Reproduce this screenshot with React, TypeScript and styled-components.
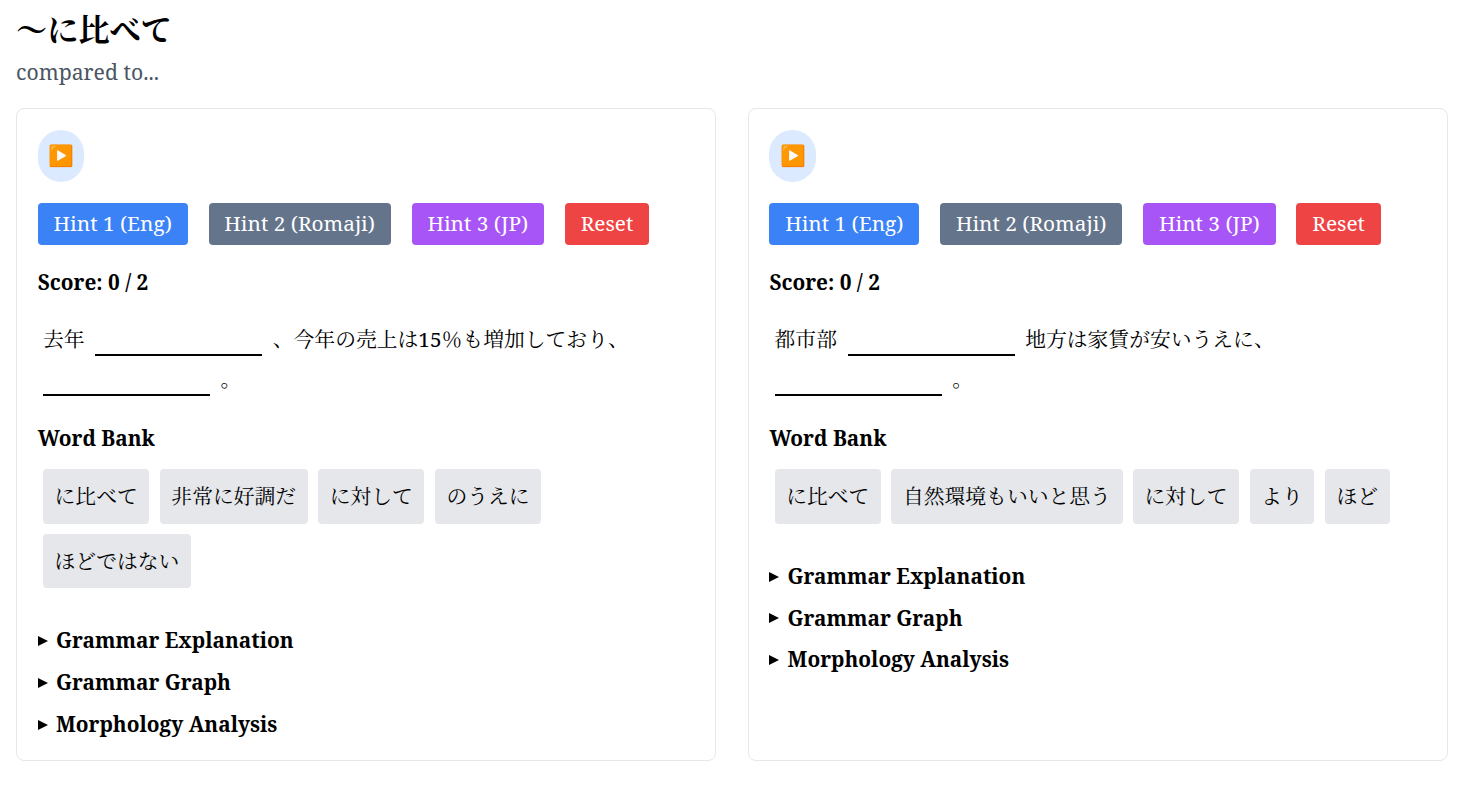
import styled, { createGlobalStyle } from 'styled-components';

const serif = `"Noto Serif", "Noto Serif CJK JP", "Liberation Serif", "Noto Sans CJK JP", serif`;

const GlobalStyle = createGlobalStyle`
  html, body {
    margin: 0;
    background: #fff;
    color: #000;
    font-family: ${serif};
    font-size: 20.8px;
  }
`;

const Page = styled.div`
  padding: 7px 16px 16px;
`;

const Title = styled.h1`
  margin: 0;
  font-size: 31.2px;
  line-height: 44px;
  font-weight: 700;
`;

const Subtitle = styled.p`
  margin: 2px 0 17px;
  font-size: 21.2px;
  line-height: 38px;
  color: #4b5563;
`;

const Grid = styled.div`
  display: grid;
  grid-template-columns: 700px 700px;
  gap: 31.6px;
`;

const Card = styled.section`
  box-sizing: border-box;
  height: 653px;
  padding: 21px 20.8px;
  border: 1px solid #e5e7eb;
  border-radius: 8px;
`;

const PlayButton = styled.button`
  display: block;
  width: 46.4px;
  height: 52px;
  padding: 0 0 0 1px;
  border: none;
  border-radius: 9999px;
  background: #dbeafe;
  font-size: 20.8px;
`;

const Toolbar = styled.div`
  display: flex;
  gap: 20.9px;
  margin-top: 21px;
`;

const HintButton = styled.button<{ $bg: string }>`
  height: 42px;
  padding: 0 15.8px 2px;
  border: none;
  border-radius: 4px;
  background: ${p => p.$bg};
  color: #fff;
  font-family: ${serif};
  font-size: 20.8px;
`;

const Score = styled.div`
  margin-top: 22px;
  line-height: 30px;
  font-weight: 700;
`;

const Sentence = styled.p`
  margin: 22px 0 0;
  padding: 0 5.2px;
  line-height: 40px;
`;

const Blank = styled.span<{ $first?: boolean }>`
  display: inline-block;
  box-sizing: border-box;
  width: 167px;
  height: 28px;
  margin: 0 10.6px 0 ${p => (p.$first ? 0 : 10.6)}px;
  border-bottom: 2px solid #000;
  vertical-align: -9px;
`;

const BankTitle = styled.div`
  margin-top: 24px;
  line-height: 30px;
  font-weight: 700;
`;

const Bank = styled.div`
  display: flex;
  flex-wrap: wrap;
  gap: 10px;
  margin-top: 16px;
  padding: 0 5.2px;
  column-gap: 10.4px;
`;

const Word = styled.span`
  padding: 12px 11.6px;
  border-radius: 4px;
  background: #e5e7eb;
  line-height: 30.6px;
`;

const Sections = styled.div`
  margin-top: 38.2px;
  display: flex;
  flex-direction: column;
  gap: 12px;
`;

const Summary = styled.div`
  display: flex;
  align-items: center;
  gap: 8.2px;
  line-height: 29.8px;
  font-weight: 700;

  &::before {
    content: '';
    width: 0;
    height: 0;
    border-left: 10px solid #000;
    border-top: 5px solid transparent;
    border-bottom: 5px solid transparent;
  }
`;

const hints = [
  { label: 'Hint 1 (Eng)', bg: '#3b82f6' },
  { label: 'Hint 2 (Romaji)', bg: '#64748b' },
  { label: 'Hint 3 (JP)', bg: '#a855f7' },
  { label: 'Reset', bg: '#ef4444' },
];

const cards = [
  {
    start: '去年',
    middle: '、今年の売上は15％も増加しており、',
    words: ['に比べて', '非常に好調だ', 'に対して', 'のうえに', 'ほどではない'],
  },
  {
    start: '都市部',
    middle: '地方は家賃が安いうえに、',
    words: ['に比べて', '自然環境もいいと思う', 'に対して', 'より', 'ほど'],
  },
];

export default function App() {
  return (
    <Page>
      <GlobalStyle />
      <Title>〜に比べて</Title>
      <Subtitle>compared to...</Subtitle>
      <Grid>
        {cards.map(card => (
          <Card key={card.start}>
            <PlayButton>▶️</PlayButton>
            <Toolbar>
              {hints.map(h => (
                <HintButton key={h.label} $bg={h.bg}>
                  {h.label}
                </HintButton>
              ))}
            </Toolbar>
            <Score>Score: 0 / 2</Score>
            <Sentence>
              {card.start}
              <Blank />
              {card.middle}
              <br />
              <Blank $first />。
            </Sentence>
            <BankTitle>Word Bank</BankTitle>
            <Bank>
              {card.words.map(w => (
                <Word key={w}>{w}</Word>
              ))}
            </Bank>
            <Sections>
              <Summary>Grammar Explanation</Summary>
              <Summary>Grammar Graph</Summary>
              <Summary>Morphology Analysis</Summary>
            </Sections>
          </Card>
        ))}
      </Grid>
    </Page>
  );
}
